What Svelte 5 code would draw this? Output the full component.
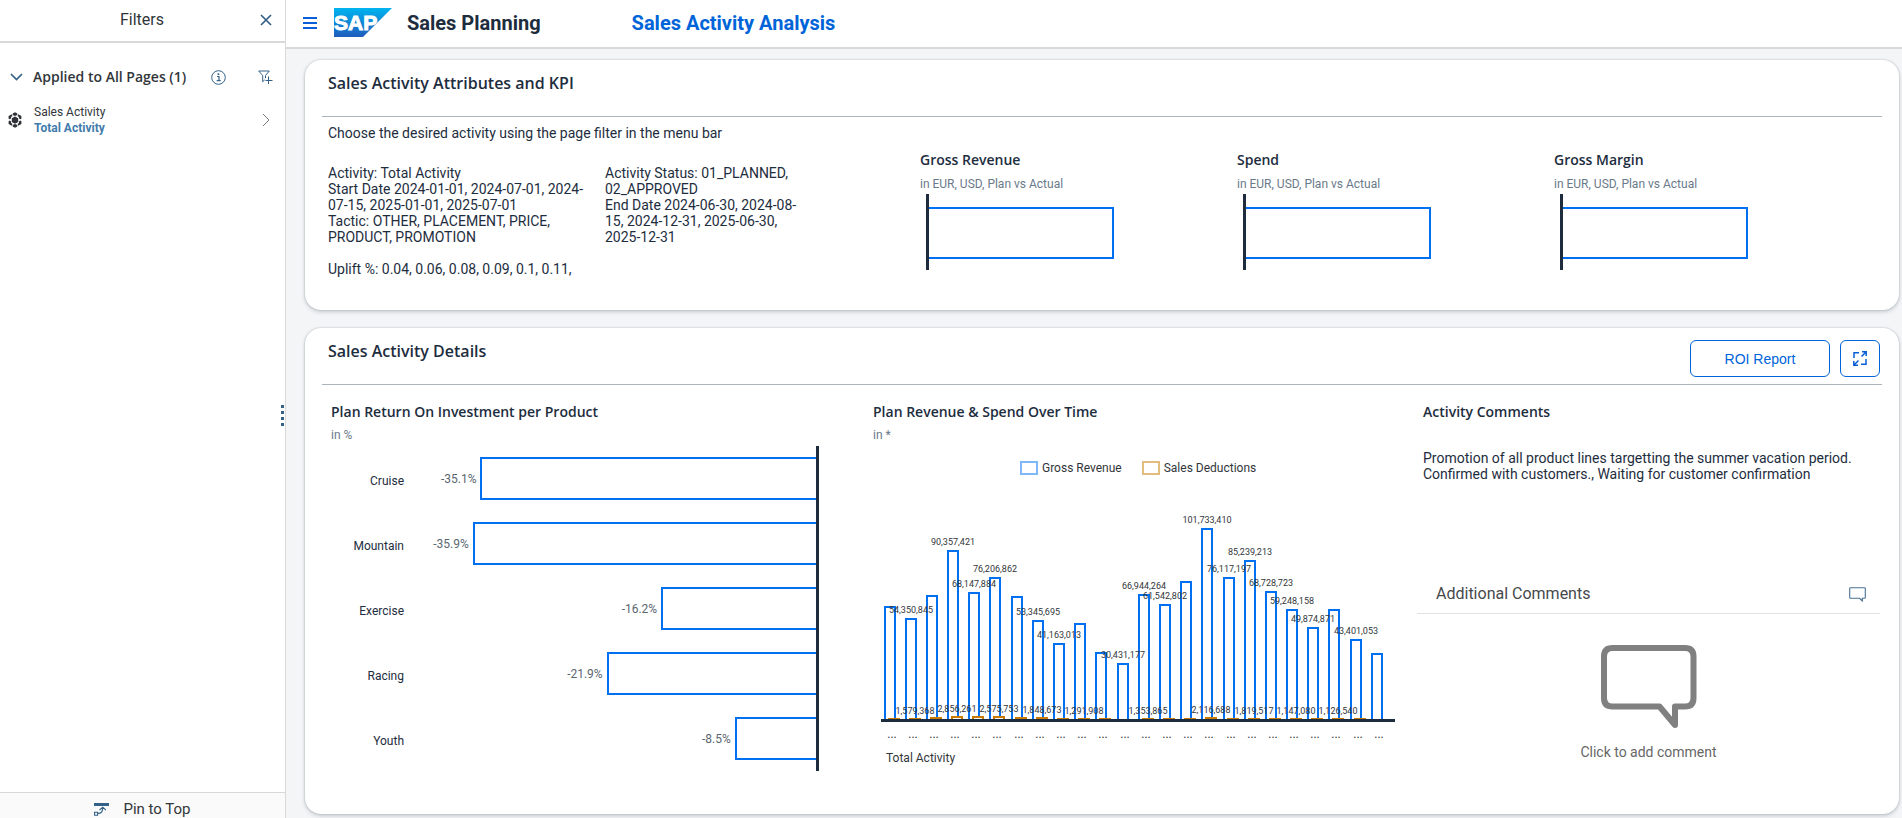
<script>
  const kpis = ['Gross Revenue', 'Spend', 'Gross Margin'];

  const products = [
    { name: 'Cruise', roi: 35.1 },
    { name: 'Mountain', roi: 35.9 },
    { name: 'Exercise', roi: 16.2 },
    { name: 'Racing', roi: 21.9 },
    { name: 'Youth', roi: 8.5 }
  ];
  const barWidth = (roi) => (roi / 35.9) * 83.3;

  // x, height of the revenue bar, its label, height of the deductions bar, its label
  const periods = [
    [11, 113, '', 1, ''],
    [32, 101, '54,350,845', 1, '1,579,368'],
    [53, 124, '', 2, ''],
    [74, 169, '90,357,421', 3, '2,856,261'],
    [95, 127, '68,147,884', 3, ''],
    [116, 142, '76,206,862', 3, '2,575,753'],
    [138, 123, '', 2, ''],
    [159, 99, '53,345,695', 2, '1,848,673'],
    [180, 76, '41,163,013', 1, ''],
    [201, 96, '', 1, '1,291,908'],
    [222, 67, '', 1, ''],
    [244, 56, '30,431,177', 0, ''],
    [265, 125, '66,944,264', 1, '1,353,865'],
    [286, 115, '61,542,802', 1, ''],
    [307, 138, '', 1, ''],
    [328, 191, '101,733,410', 2, '2,116,688'],
    [350, 142, '76,117,197', 1, ''],
    [371, 159, '85,239,213', 1, '1,819,517'],
    [392, 128, '68,728,723', 1, ''],
    [413, 110, '59,248,158', 1, '1,147,080'],
    [434, 92, '49,874,871', 1, ''],
    [455, 110, '', 1, '1,126,540'],
    [477, 80, '43,401,053', 1, ''],
    [498, 66, '', 0, '']
  ].map(([x, h, label, dh, dLabel]) => ({ x, h, label, dh, dLabel }));
  const base = 219;
</script>

<div class="app">
  <aside class="sidebar">
    <header class="side-head">
      <h2>Filters</h2>
      <button class="icon close" aria-label="Close">
        <svg width="12" height="12" viewBox="0 0 12 12"><path d="M1 1l10 10M11 1L1 11" fill="none" stroke="#346187" stroke-width="1.7" /></svg>
      </button>
    </header>

    <section class="group">
      <button class="icon" aria-label="Collapse">
        <svg width="13" height="8" viewBox="0 0 13 8"><path d="M1 1l5.500 5.500L12 1" fill="none" stroke="#346187" stroke-width="1.700" /></svg>
      </button>
      <h3>Applied to All Pages (1)</h3>
      <button class="icon" aria-label="Information">
        <svg width="15" height="15" viewBox="0 0 15 15">
          <circle cx="7.500" cy="7.500" r="6.800" fill="none" stroke="#346187" />
          <path d="M6 6.500h2v4M5.700 10.700h4" fill="none" stroke="#346187" stroke-width="1.200" />
          <rect x="6.600" y="3.300" width="1.700" height="1.700" fill="#346187" />
        </svg>
      </button>
      <button class="icon" aria-label="Add filter">
        <svg width="15" height="14" viewBox="0 0 15 14">
          <path d="M.7 1h10.600L7.500 5.500v2.700M.7 1l4 4.500v6.200l2-1.800" fill="none" stroke="#346187" />
          <path d="M10.500 6.500v7.500M7.500 10.500h7" fill="none" stroke="#346187" />
        </svg>
      </button>
    </section>

    <a class="filter" href="#filter">
      <svg width="16" height="16" viewBox="0 0 16 16" fill="#2f3338">
        <path d="M8 4.400l3.200 1.800v3.700L8 11.700 4.800 9.900V6.200z" />
        <path d="M5.700 1.600L8 .3l2.300 1.300v1.300L8 3.900l-2.300-1z" />
        <path d="M11.200 2.300l3.200 1.700v2.700l-1.200.5-1.300-.9V5l-1.300-.9z" />
        <path d="M4.800 2.300L1.600 4v2.700l1.200.5 1.300-.9V5l1.300-.9z" />
        <path d="M14.400 9.200v2.900l-3.200 1.700-.6-1.800 1.300-.9V9.500l1.300-.9z" />
        <path d="M1.600 9.200v2.900l3.200 1.700.6-1.800-1.300-.9V9.500l-1.300-.9z" />
        <path d="M5.700 14.400L8 15.700l2.300-1.300v-1.300L8 12.100l-2.300 1z" />
      </svg>
      <span class="filter-text">
        <span>Sales Activity</span>
        <strong>Total Activity</strong>
      </span>
      <svg width="8" height="14" viewBox="0 0 8 14"><path d="M1 1l6 6-6 6" fill="none" stroke="#75797e" /></svg>
    </a>

    <div class="handle"><i></i><i></i><i></i><i></i></div>

    <button class="pin">
      <svg width="15" height="13" viewBox="0 0 15 13">
        <path d="M0 0h15v3H0z" fill="#346187" />
        <path d="M.6 9.200h3v3h-3zM3.600 10.500c4 0 5-1.500 5-6M5.500 7l3.200-2.800L11.800 7" fill="none" stroke="#346187" stroke-width="1.100" />
      </svg>
      Pin to Top
    </button>
  </aside>

  <main>
    <header class="top">
      <button class="icon" aria-label="Menu">
        <svg width="14" height="12" viewBox="0 0 14 12"><path d="M0 1h14M0 6h14M0 11h14" stroke="#0a5fd8" stroke-width="2" /></svg>
      </button>
      <svg class="logo" width="58" height="29" viewBox="0 0 58 29" role="img" aria-label="SAP">
        <defs>
          <linearGradient id="sap" x1="0" y1="0" x2="0" y2="1">
            <stop offset="0" stop-color="#00b4f0" />
            <stop offset="1" stop-color="#1f5cbc" />
          </linearGradient>
        </defs>
        <path d="M0 0h58L29 29H0z" fill="url(#sap)" />
        <text x="0" y="22" fill="#fff" stroke="#fff" stroke-width="1">SAP</text>
      </svg>
      <h1>Sales Planning</h1>
      <a href="#analysis">Sales Activity Analysis</a>
    </header>

    <div class="content">
      <section class="card">
        <header class="card-head"><h2>Sales Activity Attributes and KPI</h2></header>
        <p class="intro">Choose the desired activity using the page filter in the menu bar</p>
        <div class="attributes">
          <p class="lines">Activity: Total Activity
Start Date 2024-01-01, 2024-07-01, 2024-
07-15, 2025-01-01, 2025-07-01
Tactic: OTHER, PLACEMENT, PRICE,
PRODUCT, PROMOTION

Uplift %: 0.04, 0.06, 0.08, 0.09, 0.1, 0.11,</p>
          <p class="lines">Activity Status: 01_PLANNED,
02_APPROVED
End Date 2024-06-30, 2024-08-
15, 2024-12-31, 2025-06-30,
2025-12-31</p>
          {#each kpis as kpi}
            <article class="kpi">
              <h3>{kpi}</h3>
              <p class="sub">in EUR, USD, Plan vs Actual</p>
              <div class="kpi-chart"><div></div></div>
            </article>
          {/each}
        </div>
      </section>

      <section class="card details">
        <header class="card-head">
          <h2>Sales Activity Details</h2>
          <div class="actions">
            <button class="outlined report">ROI Report</button>
            <button class="outlined expand" aria-label="Expand">
              <svg width="14" height="15" viewBox="0 0 14 15" fill="none" stroke="#0a5fd8" stroke-width="1.500">
                <path d="M6 1.700H1V7M8 13.300h5V8" />
                <path d="M9 .8h4.200V5M13 1L8.500 5.500M5 14.200H.8V10M1 14l4.500-4.500" />
              </svg>
            </button>
          </div>
        </header>

        <div class="columns">
          <article class="roi">
            <h3>Plan Return On Investment per Product</h3>
            <p class="sub">in %</p>
            <div class="rows">
              {#each products as p}
                <div class="row">
                  <span class="name">{p.name}</span>
                  <div class="track">
                    <span class="value">-{p.roi}%</span>
                    <div class="bar" style="width: {barWidth(p.roi)}%"></div>
                  </div>
                </div>
              {/each}
            </div>
          </article>

          <article class="time">
            <h3>Plan Revenue &amp; Spend Over Time</h3>
            <p class="sub">in *</p>
            <div class="legend">
              <span><i class="revenue"></i>Gross Revenue</span>
              <span><i class="deductions"></i>Sales Deductions</span>
            </div>
            <svg class="plot" viewBox="0 0 544 272">
              {#each periods as p}
                <rect x={p.x + 1} y={base - p.h + 1} width="10" height={p.h} fill="none" stroke="#0070f2" stroke-width="2" />
              {/each}
              {#each periods as p}
                {#if p.dh > 2}
                  <rect x={p.x + 5} y={base - p.dh + 1} width="10" height={p.dh} fill="#fff" stroke="#c87b00" stroke-width="2" />
                {:else if p.dh}
                  <rect x={p.x + 4} y={base - p.dh} width="12" height={p.dh} fill="#c87b00" />
                {/if}
              {/each}
              <rect x="8" y={base} width="514" height="3" fill="#1d2d3e" />
              {#each periods as p}
                <text class="num" x={p.x + 6} y={base - p.h - 5}>{p.label}</text>
                <text class="num" x={p.x + 10} y={base - p.dh - 4}>{p.dLabel}</text>
                <text class="dots" x={p.x + 8} y="238">...</text>
              {/each}
              <text class="total" x="13" y="262">Total Activity</text>
            </svg>
          </article>

          <article class="comments">
            <h3>Activity Comments</h3>
            <p class="lines note">Promotion of all product lines targetting the summer vacation period.
Confirmed with customers., Waiting for customer confirmation</p>
            <header class="add-head">
              <h4>Additional Comments</h4>
              <button class="icon" aria-label="Comments">
                <svg width="17" height="15" viewBox="0 0 17 15"><path d="M1.500.7h14q.8 0 .8.8v9q0 .8-.8.8h-2.200v2.700l-2.800-2.700h-9q-.8 0-.8-.8v-9q0-.8.8-.8z" fill="none" stroke="#4a7193" stroke-width="1.100" /></svg>
              </button>
            </header>
            <button class="add">
              <svg width="96" height="83" viewBox="0 0 96 83"><path d="M11 3H84q8.500 0 8.500 8.500V53q0 8.500-8.500 8.500H74V80L58.500 61.500H11.500Q3 61.500 3 53V11.500Q3 3 11.500 3z" fill="none" stroke="#808080" stroke-width="6" stroke-linejoin="round" /></svg>
              Click to add comment
            </button>
          </article>
        </div>
      </section>
    </div>
  </main>
</div>

<style>
  :global(body) { margin: 0; background: #f4f5f7; }
  .app {
    display: flex;
    min-height: 100vh;
    font-family: Roboto, "Liberation Sans", sans-serif;
    font-size: 14px;
    line-height: 16px;
    color: #1d2d3e;
  }
  h1, h2, h3, h4, p { margin: 0; font: inherit; }
  button { margin: 0; padding: 0; border: 0; background: none; font: inherit; color: inherit; }
  a { color: inherit; text-decoration: none; }
  svg { display: block; }
  .icon { display: flex; align-items: center; justify-content: center; }

  .sidebar {
    position: relative;
    box-sizing: border-box;
    flex: 0 0 286px;
    display: flex;
    flex-direction: column;
    background: #fff;
    border-right: 1px solid #d9d9d9;
    color: #32363a;
  }
  .side-head {
    display: grid;
    grid-template-columns: 24px 1fr 12px;
    align-items: center;
    height: 39px;
    padding: 0 13px 2px 0;
    border-bottom: 2px solid #d9d9d9;
  }
  .side-head h2 { grid-column: 2; text-align: center; font-size: 16px; }
  .group { display: flex; align-items: center; padding: 25px 12px 0 10px; height: 18px; }
  .group h3 { flex: 1; margin-left: 10px; }
  .group .icon:last-child { margin-left: 32px; }
  .filter { display: flex; align-items: center; gap: 11px; padding: 18px 15px 0 7px; font-size: 12px; }
  .filter-text { flex: 1; display: flex; flex-direction: column; }
  .filter strong { font-weight: 700; color: #427cac; }
  .handle { position: absolute; right: 1px; top: 405px; display: grid; gap: 3px; }
  .handle i { width: 3px; height: 3px; background: #346187; }
  .pin {
    display: flex;
    justify-content: center;
    align-items: center;
    gap: 14px;
    height: 26px;
    margin-top: auto;
    padding-top: 7px;
    background: #fafafa;
    border-top: 1px solid #d9d9d9;
    font-size: 15px;
  }

  main { flex: 1; min-width: 0; display: flex; flex-direction: column; }
  .top {
    display: flex;
    align-items: center;
    height: 45px;
    padding: 0 0 2px 17px;
    background: #fff;
    border-bottom: 2px solid #d9d9d9;
    font-size: 20px;
    font-weight: 700;
  }
  .logo { margin: 0 15px 0 17px; }
  .logo text { font: 700 21px "Liberation Sans", sans-serif; }
  .top a { margin-left: 91px; color: #0064d9; }

  .content { flex: 1; display: flex; flex-direction: column; gap: 18px; padding: 11px 3px 4px 19px; }
  .card {
    padding: 0 17px 33px;
    background: #fff;
    border-radius: 16px;
    box-shadow: 0 0 2px rgba(34, 53, 72, .3), 0 2px 4px rgba(34, 53, 72, .2);
  }
  .details { flex: 1; padding-bottom: 0; }
  .card-head {
    box-sizing: border-box;
    display: flex;
    justify-content: space-between;
    height: 57px;
    padding: 0 2px 0 6px;
    border-bottom: 1px solid #a9b4be;
  }
  .card-head h2 { padding-top: 13px; font-family: "Open Sans", sans-serif; font-size: 16px; font-weight: 600; line-height: 20px; }
  .intro { padding: 8px 6px 0; }
  .attributes { display: grid; grid-template-columns: 277fr 315fr 317fr 317fr 317fr; padding: 0 11px 0 6px; }
  .lines { white-space: pre-line; }
  .attributes .lines { padding-top: 24px; }
  h3 { font-family: "Open Sans", sans-serif; font-weight: 600; line-height: 18px; }
  .sub { font-size: 12px; line-height: 18px; color: #6a7a8a; }
  .kpi { padding-top: 10px; }
  .kpi .sub { margin-top: 6px; }
  .kpi-chart {
    box-sizing: border-box;
    height: 76px;
    margin: 1px 0 0 6px;
    padding-top: 13px;
    border-left: 3px solid #1d2d3e;
  }
  .kpi-chart div { width: 60%; height: 52px; border: 2px solid #0070f2; border-left: 0; box-sizing: border-box; }

  .actions { display: flex; gap: 10px; padding-top: 12px; }
  .outlined {
    box-sizing: border-box;
    height: 37px;
    border: 1px solid #0064d9;
    border-radius: 6px;
    color: #0064d9;
    font-family: "Liberation Sans", sans-serif;
  }
  .report { width: 140px; }
  .expand { width: 40px; display: flex; align-items: center; justify-content: center; }

  .columns { display: grid; grid-template-columns: 551fr 544fr 465fr; padding-top: 18px; }
  .columns .sub { margin-top: 5px; }
  .roi { padding: 0 54px 0 9px; }
  .rows { margin-top: 2px; border-right: 3px solid #1d2d3e; font-size: 12px; }
  .row { display: grid; grid-template-columns: 73px 1fr; align-items: center; height: 65px; }
  .name { text-align: right; padding-top: 4px; }
  .track { display: flex; align-items: center; justify-content: flex-end; gap: 4px; }
  .value { color: #5b6670; }
  .bar { box-sizing: border-box; height: 43px; border: 2px solid #0070f2; border-right: 0; }

  .legend { display: flex; gap: 20px; padding: 16px 0 24px 147px; font-size: 12px; line-height: 16px; color: #32363a; }
  .legend span { display: flex; align-items: center; gap: 4px; }
  .legend i { width: 14px; height: 10px; border: 2px solid #80b7f8; }
  .legend .deductions { border-color: #e3bd80; }
  .plot { width: 100%; height: auto; overflow: visible; }
  .num { font-size: 9px; text-anchor: middle; fill: #32363a; }
  .dots { font-size: 12px; text-anchor: middle; fill: #32363a; }
  .total { font-size: 12px; fill: #32363a; }

  .comments h3 { padding-left: 6px; }
  .note { padding: 29px 0 0 6px; }
  .add-head {
    display: flex;
    justify-content: space-between;
    align-items: center;
    margin: 102px 2px 0 0;
    padding: 0 14px 9px 19px;
    border-bottom: 1px solid #e0e2e4;
    font-size: 16px;
    line-height: 20px;
    color: #46494c;
  }
  .add {
    display: flex;
    flex-direction: column;
    align-items: center;
    gap: 15px;
    width: 100%;
    padding: 31px 2px 0 0;
    line-height: 18px;
    color: #666;
  }
</style>
